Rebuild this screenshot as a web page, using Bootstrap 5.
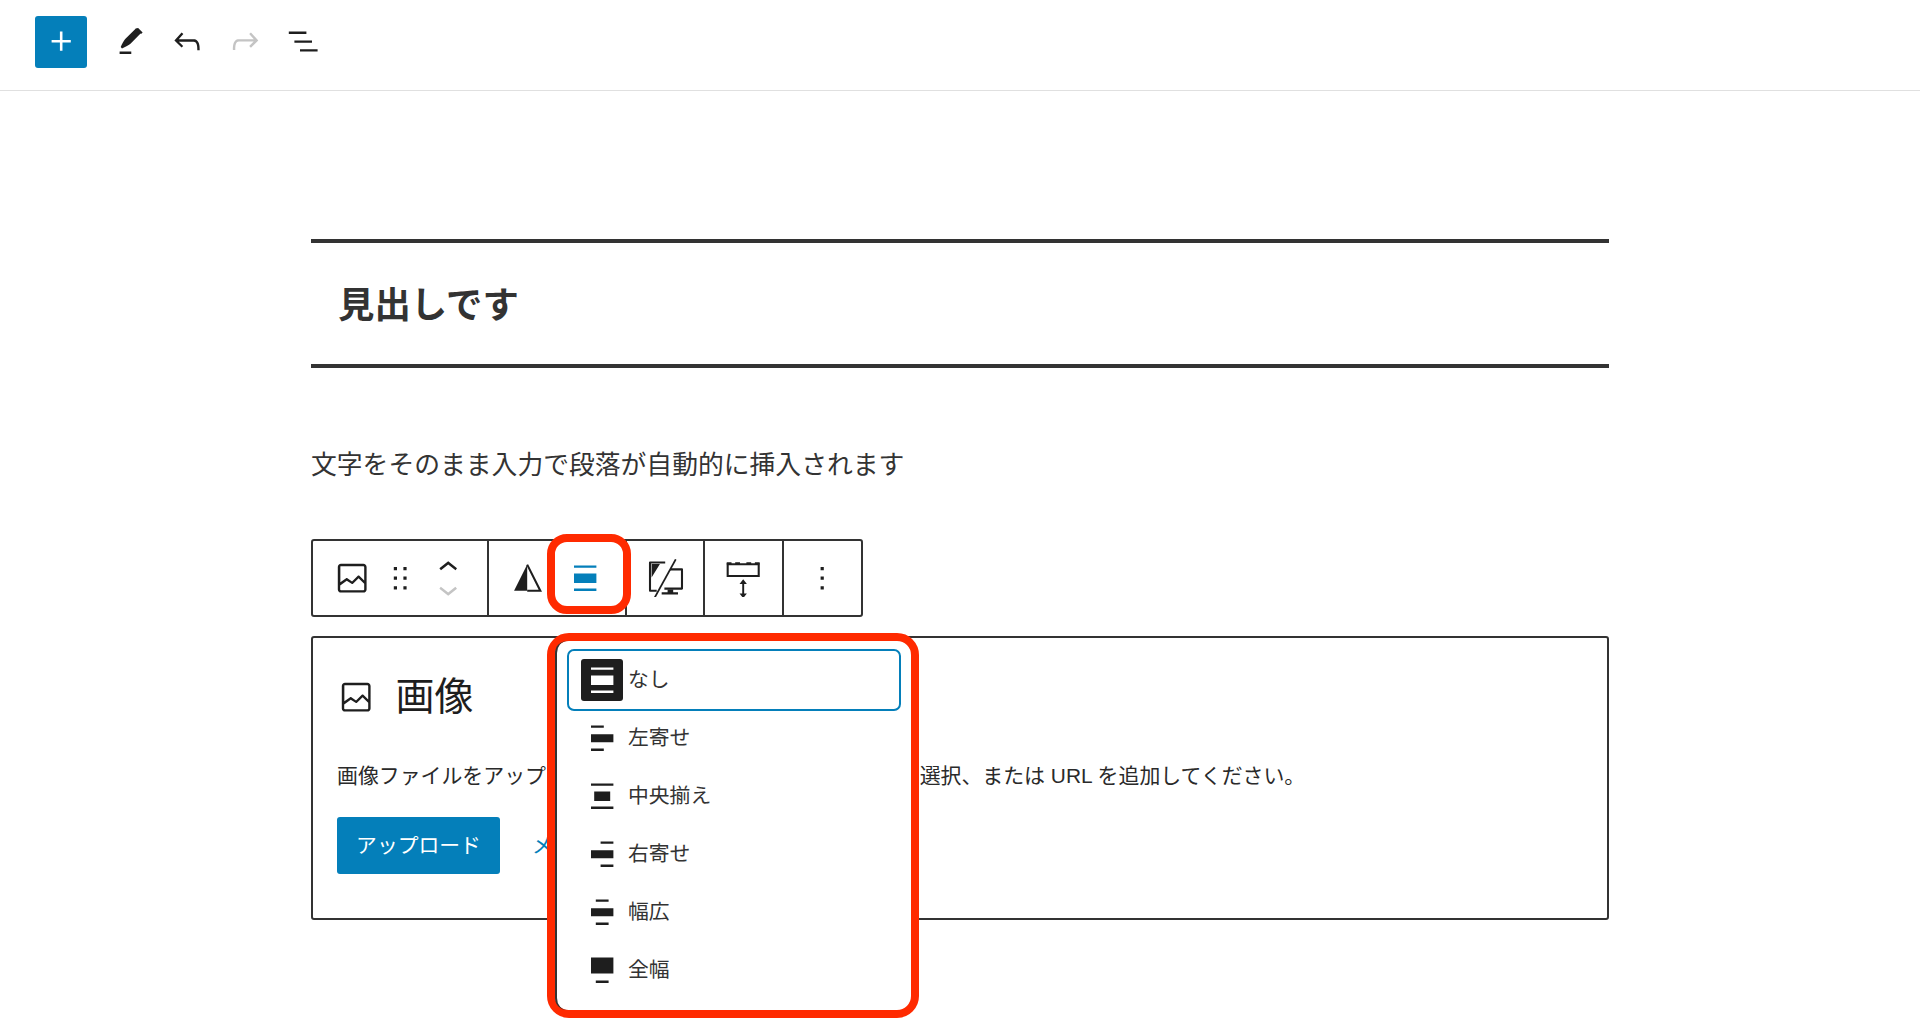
<!DOCTYPE html>
<html lang="ja">
<head>
<meta charset="utf-8">
<title>見出しです</title>
<link href="https://cdn.jsdelivr.net/npm/bootstrap@5.3.0/dist/css/bootstrap.min.css" rel="stylesheet">
<style>
html,body{height:100%;overflow:hidden}
body{font-family:"Liberation Sans","Noto Sans CJK JP",sans-serif;color:#1e1e1e;background:#fff}
.wp-top{height:91px;border-bottom:1px solid #e0e0e0;padding:0 0 7px 35px}
.wp-add{width:52px;height:52px;background:#047fba;border-radius:3px;margin-right:13px}
.wp-tool{width:58px;height:52px}
.wp-ic{width:38.4px;height:38.4px;fill:currentColor;flex:none}
.wp-dim{color:#c4c4c4}
.wp-page{width:1298px;margin:0 auto;padding-top:148px}
.wp-head{margin:0;height:129px;border-top:4px solid #333;border-bottom:4px solid #333;padding:4px 0 0 27px;font-size:36.4px;font-weight:700;color:#333;display:flex;align-items:center}
.wp-para{margin:77px 0 0;font-size:25.8px;line-height:40px;color:#333}
.wp-bar{margin-top:54px;height:78px;width:552px;border:2px solid #333;border-radius:3px}
.wp-grp{border-right:2px solid #333;height:100%}
.wp-grp:last-child{border-right:0}
.wp-cell{height:100%}
.wp-chev{width:38.4px;height:16px;fill:currentColor;display:block}
.wp-gap{gap:9px}
.wp-card{margin-top:19px;height:284px;border:2px solid #333;border-radius:3px;padding:31px 24px 0}
.wp-title{font-size:39px;line-height:56px;height:56px}
.wp-title span{margin-left:20px}
.wp-desc{margin:35px 0 0;font-size:20.9px;line-height:32px;white-space:nowrap;color:#2a2a2a}
.wp-upload{width:163px;height:57px;background:#047fba;color:#fff;font-size:20.8px;border-radius:3px;border:0;padding:0}
.wp-actions{margin-top:25px}
.wp-media{color:#047fba;font-size:20.8px;margin-left:32px}
.wp-red{position:absolute;border:8px solid #ff2a00;left:236px}
.wp-red-a{top:443px;width:84px;height:80px;border-radius:20px}
.wp-red-b{top:542px;width:372px;height:385px;background:#fff;border-radius:22px}
.wp-menu{height:100%;border-left:2px solid #333;padding:10px 12px 0 12px;border-radius:12px 0 0 12px}
.wp-row{height:58px;padding-left:12px;font-size:20.8px;color:#333}
.wp-row.wp-on{outline:2px solid #047fba;border-radius:5px}
.wp-mi{width:42px;height:42px;margin-right:5px;border-radius:3px;color:#1e1e1e}
.wp-on .wp-mi{background:#1e1e1e;color:#fff}
.wp-blue{color:#047fba}
</style>
</head>
<body>
<header class="wp-top d-flex align-items-center">
  <div class="wp-add d-flex align-items-center justify-content-center text-white">
    <svg class="wp-ic" viewBox="0 0 24 24"><path d="M18 11.2h-5.2V6h-1.6v5.2H6v1.6h5.2V18h1.6v-5.2H18z"/></svg>
  </div>
  <div class="wp-tool d-flex align-items-center justify-content-center">
    <svg class="wp-ic" viewBox="0 0 24 24"><path d="M17.6 3.800l2.800 2.700-1 1-.3-.3-6.300 6.400c-.8.8-3.300 2.100-5.300 2.900l-.8-.8c.7-2 2-4.200 2.800-5.100l6.500-6.400-.1-.1zM6 18.500h7.300V20H6z"/></svg>
  </div>
  <div class="wp-tool d-flex align-items-center justify-content-center">
    <svg class="wp-ic" viewBox="0 0 24 24"><path d="M18.300 11.700c-.6-.6-1.400-.9-2.300-.9H6.700l2.900-3.300-1.100-1-4.500 5L8.500 16l1-1-2.700-2.700H16c.5 0 .9.200 1.300.5 1 1 1 3.400 1 4.500v.3h1.500v-.2c0-1.500 0-4.300-1.500-5.700z"/></svg>
  </div>
  <div class="wp-tool wp-dim d-flex align-items-center justify-content-center">
    <svg class="wp-ic" viewBox="0 0 24 24"><path d="M15.600 6.500l-1.100 1 2.900 3.300H8c-.9 0-1.700.3-2.300.9-1.400 1.500-1.400 4.200-1.400 5.600v.2h1.500v-.3c0-1.100 0-3.500 1-4.500.3-.3.700-.5 1.300-.5h9.200L14.500 15l1.100 1.100 4.600-4.600-4.600-5z"/></svg>
  </div>
  <div class="wp-tool d-flex align-items-center justify-content-center">
    <svg class="wp-ic" viewBox="0 0 24 24"><path d="M3 6h11v1.500H3V6zm3.500 5.500h11V13h-11v-1.500zM21 17H10v1.500h11V17z"/></svg>
  </div>
</header>

<main class="wp-page position-relative">
  <h2 class="wp-head">見出しです</h2>
  <p class="wp-para">文字をそのまま入力で段落が自動的に挿入されます</p>

  <div class="wp-bar d-flex">
    <div class="wp-grp d-flex" style="width:176px">
      <div class="wp-cell d-flex align-items-center justify-content-center" style="width:78px">
        <svg class="wp-ic" viewBox="0 0 24 24"><path d="M19 3H5c-1.100 0-2 .9-2 2v14c0 1.100.9 2 2 2h14c1.100 0 2-.9 2-2V5c0-1.100-.9-2-2-2zM5 4.500h14c.3 0 .5.200.5.500v8.400l-3-2.900c-.3-.3-.8-.3-1 0L11.900 14 9 12c-.3-.2-.6-.2-.8 0l-3.600 2.600V5c-.1-.3.100-.5.400-.5zm14 15H5c-.3 0-.5-.2-.5-.5v-2.400l4.100-3 3 1.900c.3.200.7.200.9-.1L16 12l3.500 3.400V19c0 .3-.2.500-.5.500z"/></svg>
      </div>
      <div class="wp-cell d-flex align-items-center justify-content-center" style="width:19px">
        <svg class="wp-ic" viewBox="0 0 24 24"><path d="M8 7h2V5H8v2zm0 6h2v-2H8v2zm0 6h2v-2H8v2zm6-14v2h2V5h-2zm0 8h2v-2h-2v2zm0 6h2v-2h-2v2z"/></svg>
      </div>
      <div class="wp-cell wp-gap d-flex flex-column align-items-center justify-content-center" style="width:76px">
        <svg class="wp-chev" viewBox="0 6 24 10"><path d="M6.500 12.400L12 8l5.500 4.400-.9 1.200L12 10l-4.500 3.600-1-1.200z"/></svg>
        <svg class="wp-chev wp-dim" viewBox="0 8 24 10"><path d="M17.500 11.600L12 16l-5.500-4.400.9-1.200L12 14l4.500-3.600 1 1.200z"/></svg>
      </div>
    </div>
    <div class="wp-grp d-flex" style="width:138px">
      <div class="wp-cell d-flex align-items-center justify-content-center" style="width:76px">
        <svg class="wp-ic" viewBox="0 0 24 24"><path d="M12 3.500L3.800 19.800H12z"/><path d="M12 3.500l8.200 16.300H12" fill="none" stroke="currentColor" stroke-width="1.300"/></svg>
      </div>
      <div class="wp-cell wp-blue d-flex align-items-center justify-content-center" style="width:40px">
        <svg class="wp-ic" viewBox="0 0 24 24"><path d="M19 5.500H5V4h14v1.500ZM19 20H5v-1.500h14V20ZM5 9h14v6H5V9Z"/></svg>
      </div>
    </div>
    <div class="wp-grp d-flex align-items-center justify-content-center" style="width:78px">
      <svg class="wp-ic" viewBox="0 0 24 24"><path d="M12 2.200H2.500v17.600h4.200M15 6.500h7.500v12h-11" fill="none" stroke="currentColor" stroke-width="1.300" stroke-linejoin="round"/><path d="M3.500 3.200h5.200L3.500 11.500zM13.500 19h3.500v1.800h3v1.400H9.800v-1.400h3.700z"/><path d="M18.600.2L5.500 24" fill="none" stroke="currentColor" stroke-width="1.100"/></svg>
    </div>
    <div class="wp-grp d-flex align-items-center justify-content-center" style="width:79px">
      <svg class="wp-ic" viewBox="0 0 24 24"><path d="M2.300 3.300h19.400v7.300H2.300z" fill="none" stroke="currentColor" stroke-width="1.300"/><path d="M1.700 2h3v1.500h-3zM7 2h3v1.500H7zM14 2h3v1.500h-3zM19.300 2h3v1.500h-3z"/><path d="M11.400 15.700v5.800H9.700l2.300 3 2.300-3h-1.700v-5.800h1.700l-2.300-3-2.300 3z"/></svg>
    </div>
    <div class="wp-grp d-flex align-items-center justify-content-center flex-grow-1">
      <svg class="wp-ic" viewBox="0 0 24 24"><path d="M13 19h-2v-2h2v2zm0-6h-2v-2h2v2zm0-6h-2V5h2v2z"/></svg>
    </div>
  </div>

  <section class="wp-card">
    <div class="wp-title d-flex align-items-center">
      <svg class="wp-ic" viewBox="0 0 24 24"><path d="M19 3H5c-1.100 0-2 .9-2 2v14c0 1.100.9 2 2 2h14c1.100 0 2-.9 2-2V5c0-1.100-.9-2-2-2zM5 4.500h14c.3 0 .5.200.5.500v8.400l-3-2.900c-.3-.3-.8-.3-1 0L11.900 14 9 12c-.3-.2-.6-.2-.8 0l-3.600 2.600V5c-.1-.3.100-.5.400-.5zm14 15H5c-.3 0-.5-.2-.5-.5v-2.400l4.100-3 3 1.900c.3.200.7.200.9-.1L16 12l3.500 3.400V19c0 .3-.2.500-.5.500z"/></svg>
      <span>画像</span>
    </div>
    <p class="wp-desc">画像ファイルをアップロード、またはメディアライブラリから選択、または URL を追加してください。</p>
    <div class="wp-actions d-flex align-items-center">
      <button type="button" class="btn wp-upload">アップロード</button>
      <span class="wp-media">メディアライブラリ</span>
    </div>
  </section>

  <div class="wp-red wp-red-a"></div>
  <div class="wp-red wp-red-b">
    <div class="wp-menu">
      <div class="wp-row wp-on d-flex align-items-center">
        <div class="wp-mi d-flex align-items-center justify-content-center"><svg class="wp-ic" viewBox="0 0 24 24"><path d="M19 5.500H5V4h14v1.500ZM19 20H5v-1.500h14V20ZM5 9h14v6H5V9Z"/></svg></div>なし
      </div>
      <div class="wp-row d-flex align-items-center">
        <div class="wp-mi d-flex align-items-center justify-content-center"><svg class="wp-ic" viewBox="0 0 24 24"><path d="M5 4h8v1.500H5zM5 9.500h14v5H5zM5 18.500h8V20H5z"/></svg></div>左寄せ
      </div>
      <div class="wp-row d-flex align-items-center">
        <div class="wp-mi d-flex align-items-center justify-content-center"><svg class="wp-ic" viewBox="0 0 24 24"><path d="M5 4h14v1.500H5zM7 9h10v6H7zM5 18.500h14V20H5z"/></svg></div>中央揃え
      </div>
      <div class="wp-row d-flex align-items-center">
        <div class="wp-mi d-flex align-items-center justify-content-center"><svg class="wp-ic" viewBox="0 0 24 24"><path d="M11 4h8v1.500h-8zM5 9.500h14v5H5zM11 18.500h8V20h-8z"/></svg></div>右寄せ
      </div>
      <div class="wp-row d-flex align-items-center">
        <div class="wp-mi d-flex align-items-center justify-content-center"><svg class="wp-ic" viewBox="0 0 24 24"><path d="M8 4h8v1.500H8zM5 9.500h14v5H5zM8 18.500h8V20H8z"/></svg></div>幅広
      </div>
      <div class="wp-row d-flex align-items-center">
        <div class="wp-mi d-flex align-items-center justify-content-center"><svg class="wp-ic" viewBox="0 0 24 24"><path d="M5 4h14v10H5zM8 18.500h8V20H8z"/></svg></div>全幅
      </div>
    </div>
  </div>
</main>

<script src="https://cdn.jsdelivr.net/npm/bootstrap@5.3.0/dist/js/bootstrap.bundle.min.js"></script>
</body>
</html>
